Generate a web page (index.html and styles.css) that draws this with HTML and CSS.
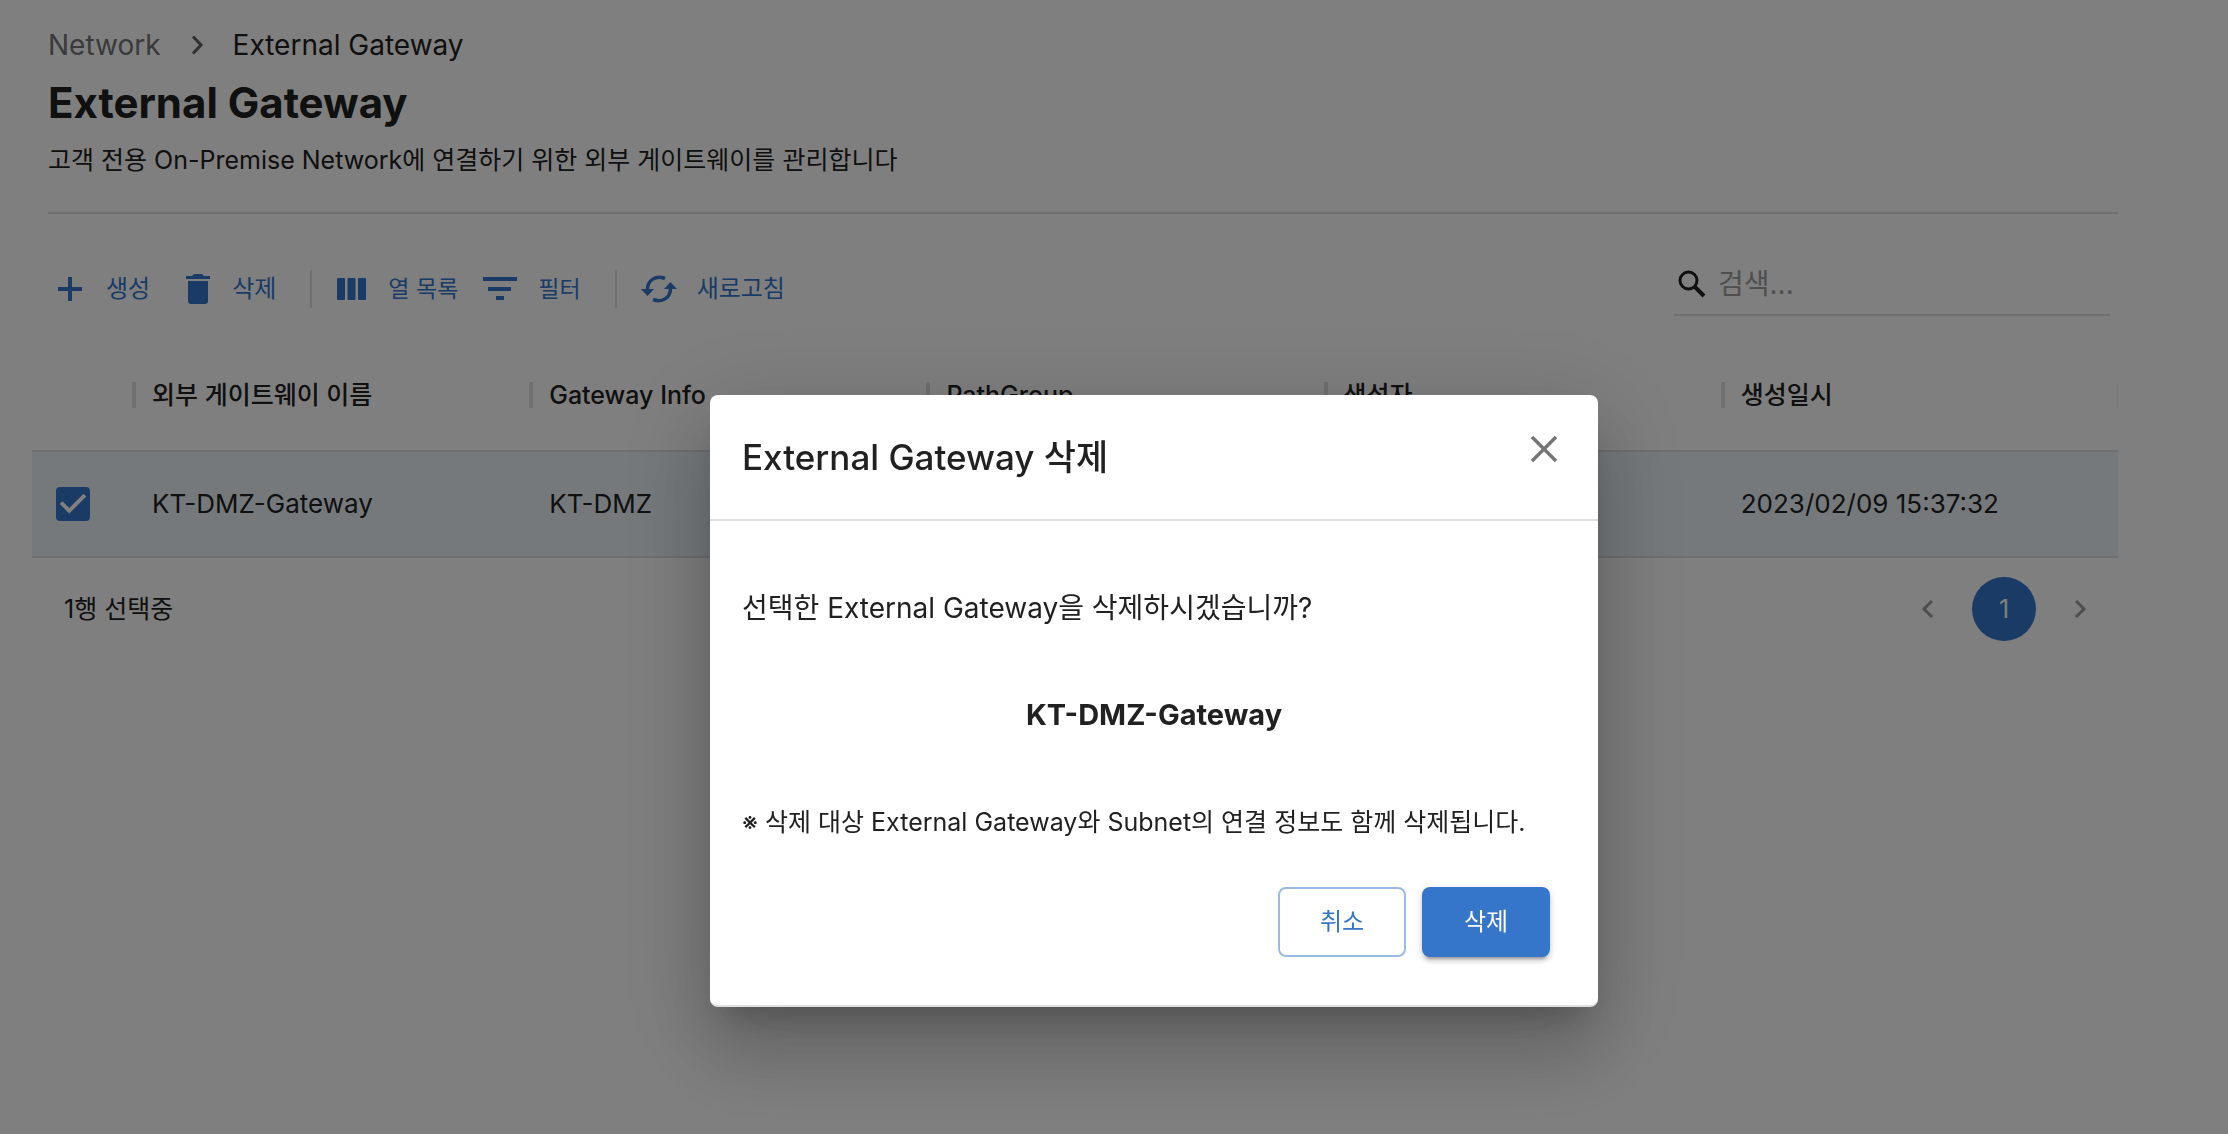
FILE: index.html
```html
<!DOCTYPE html>
<html lang="ko">
<head>
<meta charset="utf-8">
<meta name="viewport" content="width=device-width, initial-scale=1">
<title>External Gateway</title>
<link rel="stylesheet" href="styles.css">
</head>
<body>
<div class="page">
  <header class="page-header">
    <nav class="breadcrumb" aria-label="breadcrumb">
      <a class="breadcrumb-link" href="#network">Network</a>
      <svg class="breadcrumb-arrow" viewBox="0 0 20 20" aria-hidden="true"><path d="m6 1.500 8 8.500-8 8.500" fill="none" stroke="currentColor" stroke-width="3"/></svg>
      <span>External Gateway</span>
    </nav>
    <h1 class="page-title">External Gateway</h1>
    <p class="page-description">고객 전용 On-Premise Network에 연결하기 위한 외부 게이트웨이를 관리합니다</p>
  </header>

  <div class="toolbar">
    <div class="tools">
      <button class="tool tool-create" type="button">
        <svg viewBox="0 0 28 28" aria-hidden="true"><path d="M12 2h4v10h10v4H16v10h-4V16H2v-4h10z" fill="currentColor"/></svg>
        생성
      </button>
      <button class="tool tool-delete" type="button">
        <svg class="tool-icon-large" viewBox="0 0 32 32" aria-hidden="true"><path d="M4 3h6l2-2h8l2 2h6v3H4zM6 8h20v20a3 3 0 0 1-3 3H9a3 3 0 0 1-3-3z" fill="currentColor"/></svg>
        삭제
      </button>
      <span class="tool-divider"></span>
      <button class="tool tool-columns" type="button">
        <svg class="tool-icon-large" viewBox="0 0 32 32" aria-hidden="true"><g fill="currentColor"><rect x="1" y="5" width="8" height="22" rx="1"/><rect x="11.500" y="5" width="8" height="22" rx="1"/><rect x="22" y="5" width="8" height="22" rx="1"/></g></svg>
        열 목록
      </button>
      <button class="tool tool-filter" type="button">
        <svg class="tool-icon-wide" viewBox="0 0 36 28" aria-hidden="true"><path d="M1 2h34v4H1zM6 12h23v4H6zM14 21h8v4h-8z" fill="currentColor"/></svg>
        필터
      </button>
      <span class="tool-divider"></span>
      <button class="tool tool-refresh" type="button">
        <svg class="tool-icon-wide" viewBox="0 0 36 28" aria-hidden="true"><path d="M6.500 14.500C6.500 5 15 0 24 3.500M29.500 13.500c0 9.500-8.500 14.500-17.500 11" fill="none" stroke="currentColor" stroke-width="3.500"/><path d="M0 14h13l-6.500 7zM23 14h13l-6.500-7z" fill="currentColor"/></svg>
        새로고침
      </button>
    </div>
    <div class="search">
      <svg class="search-icon" viewBox="0 0 28 28" aria-hidden="true"><circle cx="10.500" cy="10.500" r="8.500" fill="none" stroke="currentColor" stroke-width="3"/><path d="m17 17 9 9" stroke="currentColor" stroke-width="4"/></svg>
      <input class="search-input" type="search" aria-label="검색" placeholder="검색...">
    </div>
  </div>

  <table class="grid">
    <thead>
      <tr>
        <th class="grid-check" aria-label="선택"></th>
        <th>외부 게이트웨이 이름</th>
        <th>Gateway Info</th>
        <th>PathGroup</th>
        <th>생성자</th>
        <th>생성일시</th>
      </tr>
    </thead>
    <tbody>
      <tr>
        <td class="grid-check"><input class="checkbox" type="checkbox" aria-label="KT-DMZ-Gateway" checked></td>
        <td>KT-DMZ-Gateway</td>
        <td>KT-DMZ</td>
        <td></td>
        <td></td>
        <td>2023/02/09 15:37:32</td>
      </tr>
    </tbody>
  </table>

  <footer class="grid-footer">
    <span>1행 선택중</span>
    <nav class="pagination" aria-label="pagination">
      <button class="page-arrow" type="button" aria-label="이전"><svg viewBox="0 0 20 20" aria-hidden="true"><path d="M14 2 6 10l8 8" fill="none" stroke="currentColor" stroke-width="3"/></svg></button>
      <button class="page-current" type="button" aria-current="page">1</button>
      <button class="page-arrow" type="button" aria-label="다음"><svg viewBox="0 0 20 20" aria-hidden="true"><path d="m6 2 8 8-8 8" fill="none" stroke="currentColor" stroke-width="3"/></svg></button>
    </nav>
  </footer>
</div>

<div class="backdrop">
  <section class="dialog" role="dialog" aria-modal="true" aria-labelledby="dialog-title">
    <header class="dialog-header">
      <h2 class="dialog-title" id="dialog-title">External Gateway 삭제</h2>
      <button class="dialog-close" type="button" aria-label="닫기"><svg viewBox="0 0 28 28" aria-hidden="true"><path d="m2 2 24 24M26 2 2 26" fill="none" stroke="currentColor" stroke-width="3.500"/></svg></button>
    </header>
    <div class="dialog-body">
      <p class="dialog-question">선택한 External Gateway을 삭제하시겠습니까?</p>
      <p class="dialog-target">KT-DMZ-Gateway</p>
      <p class="dialog-note">※ 삭제 대상 External Gateway와 Subnet의 연결 정보도 함께 삭제됩니다.</p>
    </div>
    <footer class="dialog-actions">
      <button class="button button-outlined" type="button">취소</button>
      <button class="button button-filled" type="button">삭제</button>
    </footer>
  </section>
</div>
</body>
</html>
```
FILE: styles.css
```css
* {
  box-sizing: border-box;
}

body {
  margin: 0;
  background: #fff;
  color: #212121;
  font-family: Inter, "Noto Sans CJK KR", sans-serif;
  font-size: 25px;
  line-height: 40px;
}

h1, h2, p {
  margin: 0;
}

button {
  padding: 0;
  border: 0;
  background: none;
  color: inherit;
  font: inherit;
}

svg {
  display: block;
  flex: none;
}

.page {
  padding: 20px 110px 0 32px;
}

.page-header {
  margin-left: 16px;
  padding-bottom: 30px;
  border-bottom: 2px solid #e0e0e0;
}

.breadcrumb {
  display: flex;
  align-items: center;
  gap: 26px;
  height: 50px;
  font-size: 28px;
}

.breadcrumb-link {
  color: #757575;
  text-decoration: none;
}

.breadcrumb-arrow {
  width: 20px;
  height: 20px;
  color: #616161;
}

.page-title {
  font-size: 42px;
  font-weight: 700;
  line-height: 66px;
}

.page-description {
  padding-top: 2px;
  line-height: 44px;
}

.toolbar {
  display: flex;
  justify-content: space-between;
  align-items: flex-start;
  padding: 40px 8px 0 24px;
  height: 126px;
}

.tools {
  display: flex;
  align-items: center;
  height: 70px;
  color: #3576cb;
  font-size: 24px;
}

.tool {
  display: flex;
  align-items: center;
  gap: 20px;
  white-space: nowrap;
}

.tool svg {
  width: 28px;
  height: 28px;
}

.tool .tool-icon-large {
  width: 32px;
  height: 32px;
}

.tool .tool-icon-wide {
  width: 36px;
  height: 28px;
}

.tool-create {
  gap: 22px;
}

.tool-delete {
  margin-left: 32px;
  gap: 18px;
}

.tool-divider {
  width: 2px;
  height: 38px;
  margin: 0 24px 0 34px;
  background: #e0e0e0;
}

.tool-columns,
.tool-filter {
  font-size: 23px;
}

.tool-filter {
  margin-left: 24px;
}

.search {
  display: flex;
  align-items: center;
  gap: 12px;
  width: 436px;
  height: 62px;
  padding: 4px;
  border-bottom: 2px solid #e0e0e0;
}

.search-icon {
  width: 28px;
  height: 28px;
}

.search-input {
  flex: 1;
  min-width: 0;
  padding: 0;
  border: 0;
  outline: 0;
  background: none;
  color: inherit;
  font: inherit;
  font-size: 28px;
}

.search-input::placeholder {
  color: #9e9e9e;
  opacity: 1;
}

.grid {
  width: 100%;
  border-collapse: collapse;
  table-layout: fixed;
  border-bottom: 2px solid #e0e0e0;
  font-size: 26px;
}

.grid th,
.grid td {
  height: 106px;
  padding: 0 20px;
  text-align: left;
  font-weight: 400;
}

.grid th {
  height: 111px;
  font-size: 25px;
  font-weight: 500;
  background: linear-gradient(#e0e0e0, #e0e0e0) left center / 4px 26px no-repeat;
}

.grid th:last-child {
  background:
    linear-gradient(#e0e0e0, #e0e0e0) left center / 4px 26px no-repeat,
    linear-gradient(#f0f0f0, #f0f0f0) right center / 1px 26px no-repeat;
}

.grid .grid-check {
  width: 100px;
  padding-left: 24px;
  background: none;
}

.grid tbody tr {
  border-top: 2px solid #e0e0e0;
  background: #ebf3f8;
}

.checkbox {
  display: block;
  width: 34px;
  height: 34px;
  margin: 0;
  appearance: none;
  border-radius: 4px;
  background: #3576cb;
}

.checkbox:not(:checked) {
  background: none;
  border: 3px solid #757575;
}

.checkbox:checked::before {
  content: "";
  display: block;
  height: 100%;
  background: #fff;
  clip-path: polygon(39% 78%, 11% 50%, 19% 42%, 39% 62%, 81% 20%, 89% 28%);
}

.grid-footer {
  display: flex;
  justify-content: space-between;
  align-items: center;
  height: 102px;
  padding: 0 28px 0 32px;
}

.pagination {
  display: flex;
  align-items: center;
  gap: 34px;
}

.page-arrow {
  color: #9e9e9e;
}

.page-arrow svg {
  width: 20px;
  height: 20px;
}

.page-current {
  width: 64px;
  height: 64px;
  border-radius: 50%;
  background: #3576cb;
  color: #fff;
}

.backdrop {
  position: fixed;
  inset: 0;
  display: flex;
  align-items: center;
  justify-content: center;
  padding-left: 80px;
  background: rgba(0, 0, 0, 0.5);
}

.dialog {
  width: 888px;
  max-width: 100%;
  margin-top: 268px;
  border-bottom: 2px solid #e0e0e0;
  border-radius: 8px;
  background: #fff;
  box-shadow: 0 22px 30px -14px rgba(0, 0, 0, 0.2), 0 48px 76px 6px rgba(0, 0, 0, 0.14), 0 18px 92px 16px rgba(0, 0, 0, 0.12);
}

.dialog-header {
  display: flex;
  justify-content: space-between;
  align-items: center;
  height: 126px;
  padding: 0 40px 0 32px;
  border-bottom: 2px solid #e0e0e0;
}

.dialog-title {
  font-size: 35px;
  font-weight: 500;
}

.dialog-close {
  color: #757575;
  padding-bottom: 16px;
}

.dialog-close svg {
  width: 28px;
  height: 28px;
}

.dialog-body {
  display: grid;
  gap: 67px;
  padding: 67px 32px 0;
}

.dialog-question {
  font-size: 28px;
}

.dialog-target {
  font-size: 29px;
  font-weight: 700;
  text-align: center;
}

.dialog-actions {
  display: flex;
  justify-content: flex-end;
  gap: 16px;
  padding: 45px 48px 48px;
}

.button {
  width: 128px;
  height: 70px;
  border-radius: 8px;
  font-size: 24px;
}

.button-outlined {
  border: 2px solid #9abae5;
  color: #3576cb;
}

.button-filled {
  background: #3576cb;
  color: #fff;
  box-shadow: 0 6px 2px -4px rgba(0, 0, 0, 0.2), 0 4px 4px rgba(0, 0, 0, 0.14), 0 2px 10px rgba(0, 0, 0, 0.12);
}
```
